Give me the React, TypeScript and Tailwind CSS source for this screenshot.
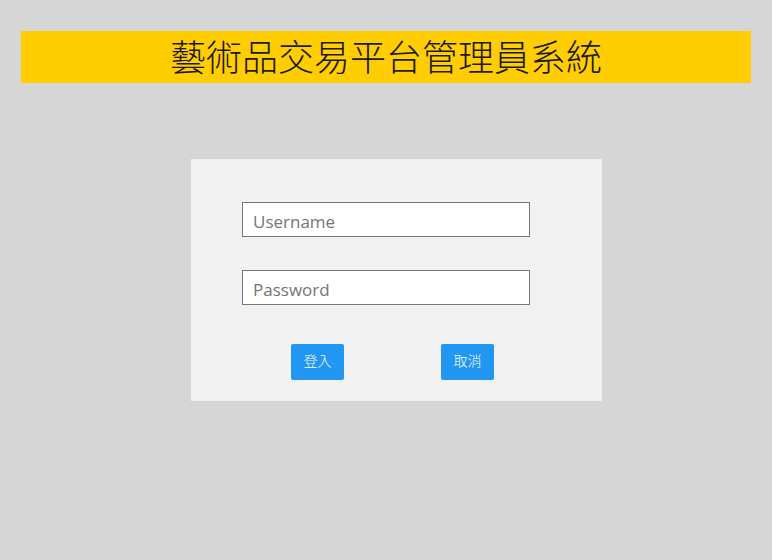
export default function App() {
  return (
    <div
      className="min-h-[560px] w-full bg-[#d6d6d6] pt-[31px]"
      style={{ fontFamily: '"Open Sans", "Noto Sans CJK TC", sans-serif' }}
    >
      <div className="mx-[21px] flex h-[52px] items-center justify-center bg-[#ffcd00]">
        <h1
          className="text-[36px] leading-none font-light text-[#1a1a1a] pb-[4px]"
          style={{ fontFamily: '"Noto Sans CJK TC", sans-serif' }}
        >
          藝術品交易平台管理員系統
        </h1>
      </div>

      <div className="ml-[191px] mt-[76px] w-[411px] bg-[#f1f1f1] pt-[43px] pb-[21px] pl-[51px]">
        <input
          type="text"
          placeholder="Username"
          className="block h-[35px] w-[288px] border border-[#777] bg-white px-[10px] pt-[3px] text-[17px] text-[#555] placeholder:text-[#757575] outline-none"
        />
        <input
          type="password"
          placeholder="Password"
          className="mt-[33px] block h-[35px] w-[288px] border border-[#777] bg-white px-[10px] pt-[3px] text-[17px] text-[#555] placeholder:text-[#757575] outline-none"
        />
        <div className="mt-[39px] flex pl-[49px] gap-[97px]">
          <button className="h-[36px] w-[53px] rounded-[2px] bg-[#2196f3] pb-[4px] text-[14px] font-light text-white">
            登入
          </button>
          <button className="h-[36px] w-[53px] rounded-[2px] bg-[#2196f3] pb-[4px] text-[14px] font-light text-white">
            取消
          </button>
        </div>
      </div>
    </div>
  );
}
